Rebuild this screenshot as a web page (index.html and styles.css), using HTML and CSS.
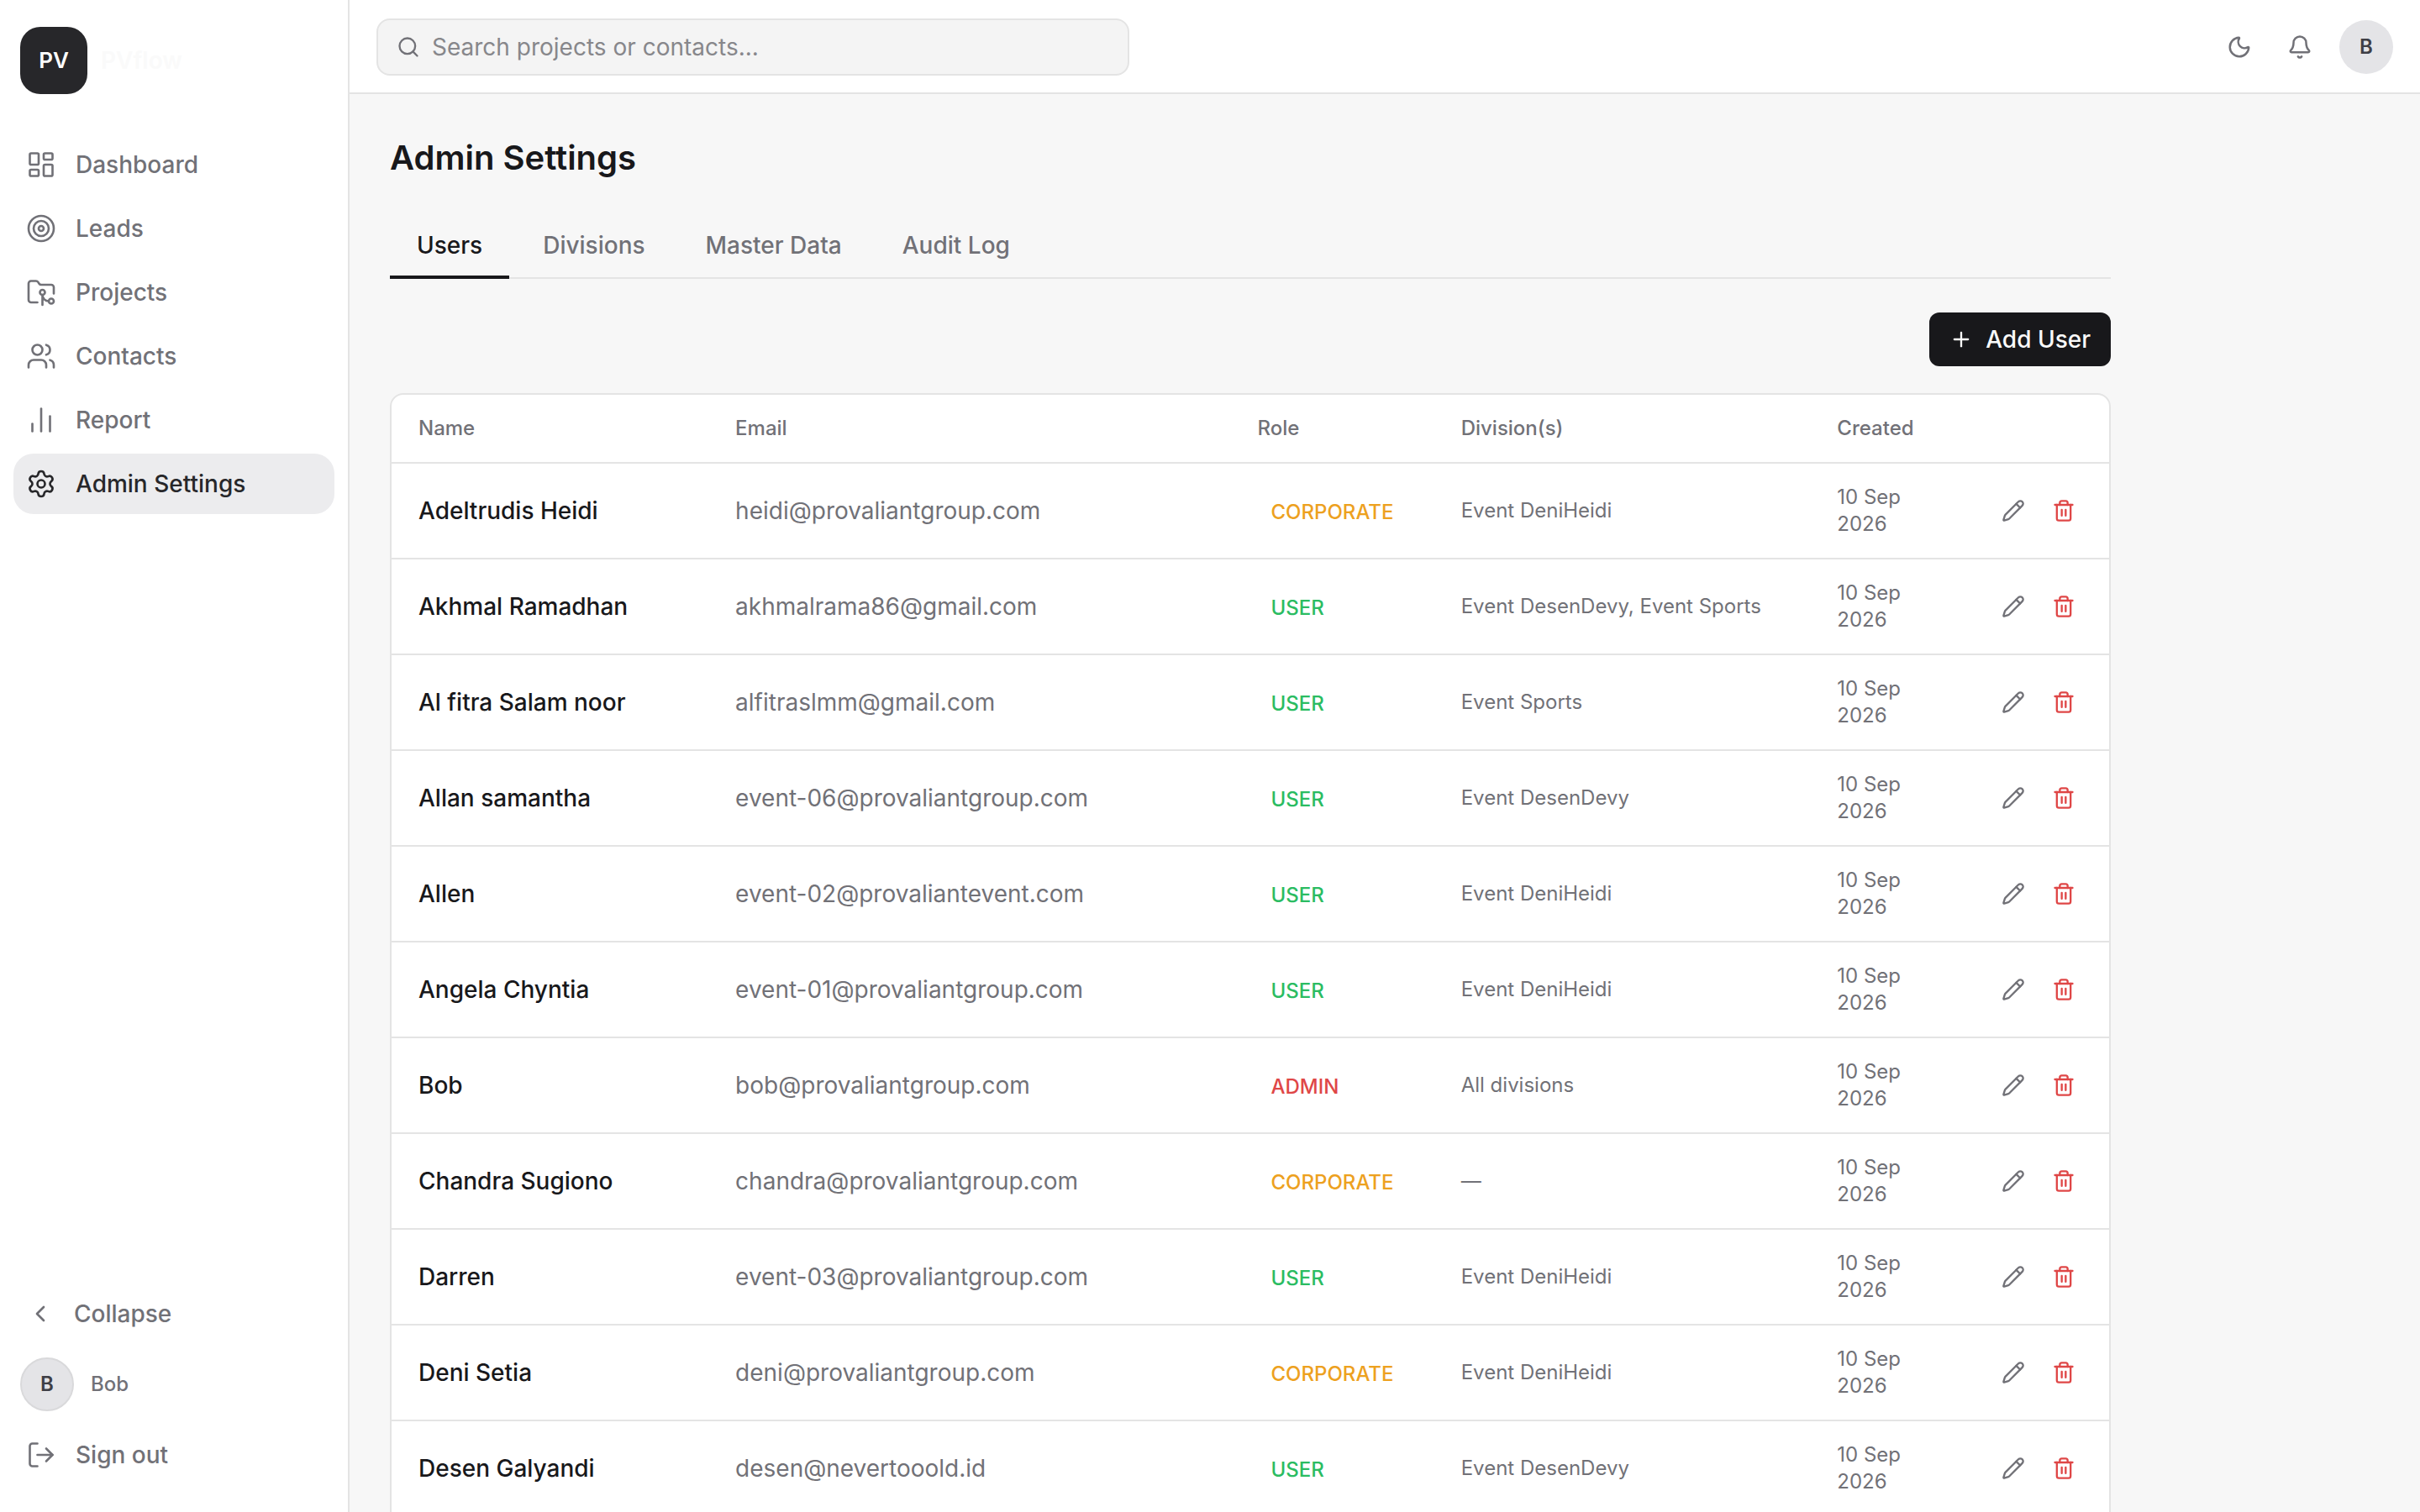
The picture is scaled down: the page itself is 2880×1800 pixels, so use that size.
FILE: index.html
```html
<!DOCTYPE html>
<html lang="en">
<head>
    <meta charset="UTF-8">
    <meta name="viewport" content="width=device-width, initial-scale=1.0">
    <title>Admin Settings - PVflow</title>
    <link rel="stylesheet" href="styles.css">
</head>
<body>
    <!-- Shared row icons -->
    <svg class="sprite" aria-hidden="true">
        <symbol id="icon-pencil" viewBox="0 0 24 24">
            <path d="M21.174 6.812a1 1 0 0 0-3.986-3.987L3.842 16.174a2 2 0 0 0-.5.83l-1.321 4.352a.5.5 0 0 0 .623.622l4.353-1.32a2 2 0 0 0 .83-.497z"/>
            <path d="m15 5 4 4"/>
        </symbol>
        <symbol id="icon-trash" viewBox="0 0 24 24">
            <path d="M3 6h18"/>
            <path d="M19 6v14a2 2 0 0 1-2 2H7a2 2 0 0 1-2-2V6"/>
            <path d="M8 6V4a2 2 0 0 1 2-2h4a2 2 0 0 1 2 2v2"/>
            <path d="M10 11v6M14 11v6"/>
        </symbol>
    </svg>

    <div class="app">
        <aside class="sidebar">
            <div class="brand">
                <span class="brand-mark">PV</span>
                <span class="brand-name">PVflow</span>
            </div>
            <nav class="nav">
                <a href="#dashboard" class="nav-link">
                    <svg class="icon" viewBox="0 0 24 24"><rect width="7" height="9" x="3" y="3" rx="1"/><rect width="7" height="5" x="14" y="3" rx="1"/><rect width="7" height="9" x="14" y="12" rx="1"/><rect width="7" height="5" x="3" y="16" rx="1"/></svg>
                    Dashboard
                </a>
                <a href="#leads" class="nav-link">
                    <svg class="icon" viewBox="0 0 24 24"><circle cx="12" cy="12" r="10"/><circle cx="12" cy="12" r="6"/><circle cx="12" cy="12" r="2"/></svg>
                    Leads
                </a>
                <a href="#projects" class="nav-link">
                    <svg class="icon" viewBox="0 0 24 24"><path d="M18 19a5 5 0 0 1-5-5v8"/><path d="M9 20H4a2 2 0 0 1-2-2V5a2 2 0 0 1 2-2h3.9a2 2 0 0 1 1.69.9l.81 1.2a2 2 0 0 0 1.67.9H20a2 2 0 0 1 2 2v5"/><circle cx="13" cy="12" r="2"/><circle cx="20" cy="19" r="2"/></svg>
                    Projects
                </a>
                <a href="#contacts" class="nav-link">
                    <svg class="icon" viewBox="0 0 24 24"><path d="M16 21v-2a4 4 0 0 0-4-4H6a4 4 0 0 0-4 4v2"/><path d="M16 3.128a4 4 0 0 1 0 7.744"/><path d="M22 21v-2a4 4 0 0 0-3-3.87"/><circle cx="9" cy="7" r="4"/></svg>
                    Contacts
                </a>
                <a href="#report" class="nav-link">
                    <svg class="icon" viewBox="0 0 24 24"><path d="M5 21v-6"/><path d="M12 21V3"/><path d="M19 21V9"/></svg>
                    Report
                </a>
                <a href="#admin" class="nav-link active">
                    <svg class="icon" viewBox="0 0 24 24"><path d="M9.671 4.136a2.34 2.34 0 0 1 4.659 0 2.34 2.34 0 0 0 3.319 1.915 2.34 2.34 0 0 1 2.33 4.033 2.34 2.34 0 0 0 0 3.831 2.34 2.34 0 0 1-2.33 4.033 2.34 2.34 0 0 0-3.319 1.915 2.34 2.34 0 0 1-4.659 0 2.34 2.34 0 0 0-3.32-1.915 2.34 2.34 0 0 1-2.33-4.033 2.34 2.34 0 0 0 0-3.831A2.34 2.34 0 0 1 6.35 6.051a2.34 2.34 0 0 0 3.319-1.915"/><circle cx="12" cy="12" r="3"/></svg>
                    Admin Settings
                </a>
            </nav>
            <div class="sidebar-footer">
                <button type="button" class="nav-link nav-collapse">
                    <svg class="icon" viewBox="0 0 24 24"><path d="m15 18-6-6 6-6"/></svg>
                    Collapse
                </button>
                <div class="account">
                    <span class="avatar avatar-ring">B</span>
                    <span>Bob</span>
                </div>
                <button type="button" class="nav-link">
                    <svg class="icon" viewBox="0 0 24 24"><path d="m16 17 5-5-5-5"/><path d="M21 12H9"/><path d="M9 21H5a2 2 0 0 1-2-2V5a2 2 0 0 1 2-2h4"/></svg>
                    Sign out
                </button>
            </div>
        </aside>

        <div class="page">
            <header class="topbar">
                <label class="search">
                    <svg class="icon icon-search" viewBox="0 0 24 24"><path d="m21 21-4.34-4.34"/><circle cx="11" cy="11" r="8"/></svg>
                    <input type="search" placeholder="Search projects or contacts..." aria-label="Search projects or contacts">
                </label>
                <div class="topbar-actions">
                    <button type="button" class="icon-button" aria-label="Toggle theme">
                        <svg class="icon" viewBox="0 0 24 24"><path d="M20.985 12.486a9 9 0 1 1-9.473-9.472c.405-.022.617.46.402.803a6 6 0 0 0 8.268 8.268c.344-.215.825-.004.803.401"/></svg>
                    </button>
                    <button type="button" class="icon-button" aria-label="Notifications">
                        <svg class="icon" viewBox="0 0 24 24"><path d="M10.268 21a2 2 0 0 0 3.464 0"/><path d="M3.262 15.326A1 1 0 0 0 4 17h16a1 1 0 0 0 .74-1.673C19.41 13.956 18 12.499 18 8A6 6 0 0 0 6 8c0 4.499-1.411 5.956-2.738 7.326"/></svg>
                    </button>
                    <button type="button" class="avatar" aria-label="Account">B</button>
                </div>
            </header>

            <main class="content">
                <h1>Admin Settings</h1>
                <div class="tabs" role="tablist">
                    <button type="button" class="tab active" role="tab" aria-selected="true">Users</button>
                    <button type="button" class="tab" role="tab">Divisions</button>
                    <button type="button" class="tab" role="tab">Master Data</button>
                    <button type="button" class="tab" role="tab">Audit Log</button>
                </div>
                <div class="toolbar">
                    <button type="button" class="add-button">
                        <svg class="icon" viewBox="0 0 24 24"><path d="M5 12h14"/><path d="M12 5v14"/></svg>
                        Add User
                    </button>
                </div>
                <div class="card">
                    <table id="usersTable">
                        <thead>
                            <tr>
                                <th class="col-name">Name</th>
                                <th class="col-email">Email</th>
                                <th class="col-role">Role</th>
                                <th class="col-divisions">Division(s)</th>
                                <th class="col-created">Created</th>
                                <th class="col-actions" aria-label="Actions"></th>
                            </tr>
                        </thead>
                        <tbody></tbody>
                    </table>
                </div>
            </main>
        </div>
    </div>
    <script src="script.js"></script>
</body>
</html>
```

FILE: styles.css
```css
* {
    box-sizing: border-box;
}

body {
    margin: 0;
    font-family: Inter, "Liberation Sans", sans-serif;
    font-size: 28px;
    line-height: 40px;
    color: #18181b;
    background-color: #f7f7f7;
}

button, input {
    font: inherit;
    color: inherit;
    margin: 0;
    padding: 0;
    border: none;
    background: none;
}

button {
    cursor: pointer;
}

.sprite {
    display: none;
}

.icon {
    flex: none;
    width: 36px;
    height: 36px;
    fill: none;
    stroke: currentColor;
    stroke-width: 1.75;
    stroke-linecap: round;
    stroke-linejoin: round;
}

.app {
    display: flex;
    height: 100vh;
    overflow: hidden;
}

/* Sidebar */
.sidebar {
    display: flex;
    flex-direction: column;
    flex: none;
    width: 416px;
    background-color: #fff;
    border-right: 2px solid #e4e4e4;
    color: #717177;
}

.brand {
    display: flex;
    align-items: center;
    gap: 16px;
    padding: 32px 24px 48px;
    font-weight: 600;
}

.brand-mark {
    display: flex;
    align-items: center;
    justify-content: center;
    width: 80px;
    height: 80px;
    border-radius: 24px;
    background-color: #27272a;
    color: #fff;
    font-size: 26px;
}

.brand-name {
    color: #fafafa;
}

.nav {
    display: flex;
    flex-direction: column;
    flex: 1;
    gap: 4px;
    padding: 0 16px;
}

.nav-link {
    display: flex;
    align-items: center;
    gap: 23px;
    height: 72px;
    padding: 0 15px;
    border-radius: 24px;
    font-weight: 500;
    color: inherit;
    text-decoration: none;
}

.nav-link.active {
    background-color: #ececee;
    color: #27272a;
}

.nav-collapse {
    gap: 24px;
    padding: 0 16px;
}

.nav-collapse .icon {
    width: 32px;
    height: 32px;
    stroke-width: 2;
}

.sidebar-footer {
    display: flex;
    flex-direction: column;
    gap: 16px;
    padding: 0 16px 32px;
}

.account {
    display: flex;
    align-items: center;
    gap: 20px;
    padding: 0 8px;
    font-size: 24px;
    font-weight: 500;
}

.avatar {
    display: flex;
    align-items: center;
    justify-content: center;
    width: 64px;
    height: 64px;
    border-radius: 50%;
    background-color: #e4e4e7;
    color: #3f3f46;
    font-size: 24px;
    font-weight: 600;
}

.avatar-ring {
    border: 2px solid #d9d9db;
}

/* Top bar */
.page {
    display: flex;
    flex-direction: column;
    flex: 1;
    min-width: 0;
}

.topbar {
    display: flex;
    align-items: center;
    justify-content: space-between;
    flex: none;
    height: 112px;
    padding: 2px 32px 0;
    background-color: #fff;
    border-bottom: 2px solid #e4e4e4;
}

.search {
    display: flex;
    align-items: center;
    flex: 0 1 896px;
    gap: 14px;
    height: 68px;
    padding: 0 22px;
    border: 2px solid #e4e4e4;
    border-radius: 16px;
    background-color: #f4f4f4;
    color: #717177;
}

.search input {
    flex: 1;
    min-width: 0;
    outline: none;
}

.search input::placeholder {
    color: #87878b;
}

.icon-search {
    width: 28px;
    height: 28px;
    stroke-width: 2;
}

.topbar-actions {
    display: flex;
    gap: 8px;
    color: #717177;
}

.topbar-actions .avatar {
    margin-left: 7px;
}

.icon-button {
    display: flex;
    align-items: center;
    justify-content: center;
    width: 64px;
    height: 64px;
}

.icon-button .icon {
    width: 30px;
    height: 30px;
    stroke-width: 2;
}

/* Content */
.content {
    flex: 1;
    max-width: 2144px;
    padding: 48px;
    overflow: hidden;
}

h1 {
    margin: 0 0 32px;
    font-size: 40px;
    line-height: 56px;
    font-weight: 600;
}

.tabs {
    display: flex;
    gap: 8px;
    border-bottom: 2px solid #e4e4e4;
}

.tab {
    height: 84px;
    margin-bottom: -2px;
    padding: 8px 32px 0;
    border-bottom: 4px solid transparent;
    font-weight: 500;
    color: #717177;
}

.tab.active {
    border-color: #18181b;
    color: #18181b;
}

.toolbar {
    display: flex;
    justify-content: flex-end;
    padding: 40px 0 32px;
}

.add-button {
    display: flex;
    align-items: center;
    gap: 15px;
    height: 64px;
    padding: 0 24px;
    border-radius: 12px;
    background-color: #18181b;
    color: #fafafa;
    font-weight: 500;
}

.add-button .icon {
    width: 28px;
    height: 28px;
    stroke-width: 2;
}

/* Users table */
.card {
    border: 2px solid #e4e4e4;
    border-radius: 16px 16px 0 0;
    background-color: #fff;
    overflow: hidden;
}

table {
    width: 100%;
    table-layout: fixed;
    border-collapse: separate;
    border-spacing: 0;
}

th, td {
    padding: 24px 32px;
    border-bottom: 2px solid #e4e4e4;
    text-align: left;
    vertical-align: middle;
    font-size: 24px;
    line-height: 32px;
    color: #717177;
}

th {
    font-weight: 500;
}

.col-name {
    width: 18.45%;
}

.col-email {
    width: 30.4%;
}

.col-role {
    width: 11.85%;
}

.col-divisions {
    width: 21.9%;
}

.col-created {
    width: 8.7%;
}

.cell-name, .cell-email {
    font-size: 28px;
}

.cell-name {
    font-weight: 500;
    color: #18181b;
}

.role {
    display: block;
    padding: 4px 16px 0;
    font-weight: 500;
}

.role-corporate {
    color: #eda11f;
}

.role-user {
    color: #2bbc62;
}

.role-admin {
    color: #df4747;
}

.actions {
    display: flex;
    justify-content: flex-end;
    gap: 8px;
    margin-right: -4px;
}

.action {
    display: flex;
    align-items: center;
    justify-content: center;
    width: 52px;
    height: 52px;
}

.action .icon {
    width: 28px;
    height: 28px;
    stroke-width: 2;
}

.action-delete {
    color: #df4747;
}
```

FILE: script.js
```js
const users = [
    { name: 'Adeltrudis Heidi', email: 'heidi@provaliantgroup.com', role: 'CORPORATE', divisions: 'Event DeniHeidi' },
    { name: 'Akhmal Ramadhan', email: 'akhmalrama86@gmail.com', role: 'USER', divisions: 'Event DesenDevy, Event Sports' },
    { name: 'Al fitra Salam noor', email: 'alfitraslmm@gmail.com', role: 'USER', divisions: 'Event Sports' },
    { name: 'Allan samantha', email: 'event-06@provaliantgroup.com', role: 'USER', divisions: 'Event DesenDevy' },
    { name: 'Allen', email: 'event-02@provaliantevent.com', role: 'USER', divisions: 'Event DeniHeidi' },
    { name: 'Angela Chyntia', email: 'event-01@provaliantgroup.com', role: 'USER', divisions: 'Event DeniHeidi' },
    { name: 'Bob', email: 'bob@provaliantgroup.com', role: 'ADMIN', divisions: 'All divisions' },
    { name: 'Chandra Sugiono', email: 'chandra@provaliantgroup.com', role: 'CORPORATE', divisions: '—' },
    { name: 'Darren', email: 'event-03@provaliantgroup.com', role: 'USER', divisions: 'Event DeniHeidi' },
    { name: 'Deni Setia', email: 'deni@provaliantgroup.com', role: 'CORPORATE', divisions: 'Event DeniHeidi' },
    { name: 'Desen Galyandi', email: 'desen@nevertooold.id', role: 'USER', divisions: 'Event DesenDevy' }
];

const tableBody = document.querySelector('#usersTable tbody');

users.forEach(user => {
    const row = document.createElement('tr');
    row.innerHTML = `
        <td class="cell-name">${user.name}</td>
        <td class="cell-email">${user.email}</td>
        <td><span class="role role-${user.role.toLowerCase()}">${user.role}</span></td>
        <td>${user.divisions}</td>
        <td>10 Sep 2026</td>
        <td>
            <div class="actions">
                <button type="button" class="action" aria-label="Edit ${user.name}"><svg class="icon"><use href="#icon-pencil"/></svg></button>
                <button type="button" class="action action-delete" aria-label="Delete ${user.name}"><svg class="icon"><use href="#icon-trash"/></svg></button>
            </div>
        </td>
    `;
    tableBody.appendChild(row);
});
```
